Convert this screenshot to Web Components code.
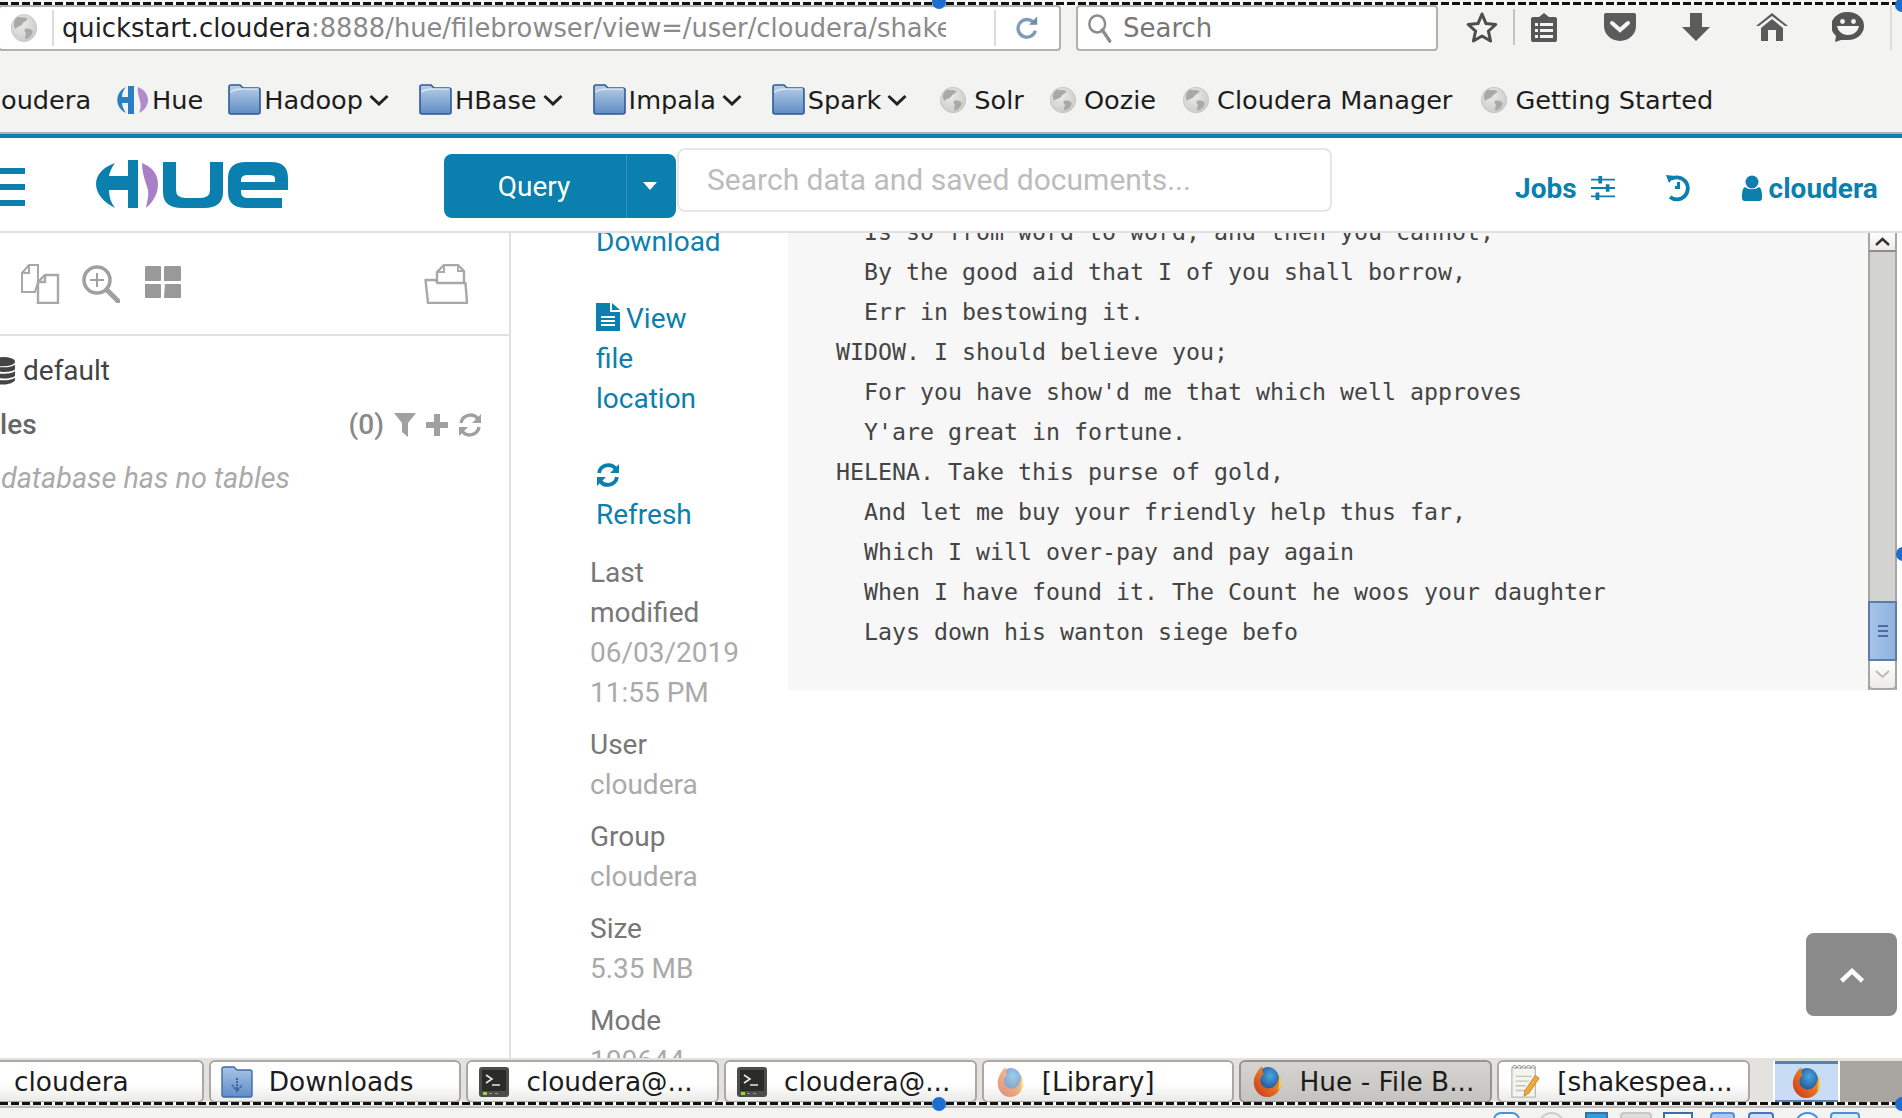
<!DOCTYPE html>
<html lang="en">
<head>
<meta charset="utf-8">
<title>Hue - File Browser</title>
<style>
  html, body { margin: 0; height: 100%; overflow: hidden; background: #fff; }
</style>
</head>
<body>
<vm-screen>
  <ff-toolbar></ff-toolbar>
  <bm-bar></bm-bar>
  <hue-nav></hue-nav>
  <hue-main></hue-main>
  <task-bar></task-bar>
  <status-strip></status-strip>
  <sel-frame></sel-frame>
</vm-screen>

<script>
const BLUE = '#0B7FAD';

// small svg set, viewBox + body. sizes come from the attributes of ui-icon
const ICONS = {
  globe: ['0 0 32 32', `<defs><radialGradient id="g" cx=".4" cy=".35" r=".8"><stop offset="0" stop-color="#ebebe9"/><stop offset="1" stop-color="#c4c4c2"/></radialGradient></defs>
    <circle cx="16" cy="16" r="14.5" fill="url(#g)" stroke="#c6c6c4"/>
    <path d="M9 4c4 1 8 0 11 2-1 3-5 3-6 6-2 3-6 2-8 5-2-3-3-9 3-13zM17 17c4-1 8 0 9 3-1 4-4 7-8 8-2-3 1-5 0-7-1-1-2-3-1-4z" fill="#a9a9a7"/>`],
  reload: ['0 0 28 28', `<path d="M22 9.5A9.5 9.5 0 1 0 23 17" fill="none" stroke="#7d9cb8" stroke-width="3.6"/><path d="M16 10.5h9v-9z" fill="#6f8eab"/>`],
  search: ['0 0 28 30', `<circle cx="11" cy="11" r="8.5" fill="none" stroke="#8c8c8c" stroke-width="2.6"/><path d="M16.5 17l8 11" stroke="#8c8c8c" stroke-width="3.6" stroke-linecap="round"/>`],
  star: ['0 0 32 32', `<path d="M16 3l4 9.6 9.8.9-7.4 6.6 2.2 9.9L16 25l-8.6 5 2.2-9.9-7.4-6.6 9.8-.9z" fill="#f4f4f2" stroke="#4d4d4d" stroke-width="3" stroke-linejoin="round"/>`],
  reader: ['0 0 28 30', `<path d="M3 5h6l5-4 5 4h6a2 2 0 0 1 2 2v21a2 2 0 0 1-2 2H3a2 2 0 0 1-2-2V7a2 2 0 0 1 2-2z" fill="#575757"/><path d="M5 11h3v3H5zM5 17h3v3H5zM5 23h3v3H5zM10 11h13v3H10zM10 17h13v3H10zM10 23h13v3H10z" fill="#f4f4f2"/>`],
  pocket: ['0 0 32 28', `<path d="M2 0h28a2 2 0 0 1 2 2v11a16 15 0 0 1-32 0V2a2 2 0 0 1 2-2z" fill="#5b5b5b"/><path d="M8 10l8 7 8-7" fill="none" stroke="#f4f4f2" stroke-width="4" stroke-linecap="round"/>`],
  download: ['0 0 28 28', `<path d="M8 0h12v14h8L14 28 0 14h8z" fill="#5b5b5b"/>`],
  home: ['0 0 32 28', `<path d="M16 0l16 13h-3L16 3 3 13H0z" fill="#5b5b5b"/><path d="M16 6l11 9v13h-7V17h-8v11H5V15z" fill="#5b5b5b"/>`],
  smile: ['0 0 32 30', `<path d="M16 0a16 14 0 0 1 0 28H9l-6 2 1-6A16 14 0 0 1 16 0z" fill="#555"/><circle cx="10.5" cy="9.500" r="2.4" fill="#f4f4f2"/><circle cx="21.5" cy="9.500" r="2.4" fill="#f4f4f2"/><path d="M5 14h22c-1 6-6 9-11 9s-10-3-11-9z" fill="#f4f4f2"/>`],
  hueFav: ['0 0 32 28', `<path d="M10 1a14 14 0 0 0 0 26c-3-4-4-8-4-10h6v11h6V0h-6v11H6c0-3 1-7 4-10z" fill="#2a7fc4"/><path d="M22 1c7 3 10 8 10 13s-3 10-9 13c2-5 2-8 1-12-1-5-3-9-2-14z" fill="#b08ccb"/>`],
  folder: ['0 0 33 31', `<defs><linearGradient id="f" x1="0" y1="0" x2="0" y2="1"><stop offset="0" stop-color="#b9cfe8"/><stop offset="1" stop-color="#5f8dc4"/></linearGradient></defs>
    <path d="M3 1h9l3 3h15a2 2 0 0 1 2 2v22a2 2 0 0 1-2 2H3a2 2 0 0 1-2-2V3a2 2 0 0 1 2-2z" fill="url(#f)" stroke="#2f5a9a" stroke-width="1.6"/><path d="M2.5 8c4-3 8-3 12-3h16" fill="none" stroke="#dce8f5" stroke-width="1.6"/>`],
  chev: ['0 0 20 12', `<path d="M1.5 2l8.5 8 8.500-8" fill="none" stroke="#222" stroke-width="3"/>`],
  caret: ['0 0 14 8', `<path d="M0 0h14L7 8z" fill="#fff"/>`],
  sliders: ['0 0 26 26', `<path d="M0 4h26M0 13h26M0 22h26" stroke="${BLUE}" stroke-width="2"/><path d="M8 0h4v8H8zM16 9h4v8h-4zM5 18h4v8H5z" fill="${BLUE}"/>`],
  history: ['0 0 26 28', `<path d="M6 5a11 11 0 1 1-1 18" fill="none" stroke="${BLUE}" stroke-width="3.8"/><path d="M1 1l9 1-6 7zM12 8h3v7h-5v-3h2z" fill="${BLUE}"/>`],
  user: ['0 0 20 26', `<circle cx="10" cy="7" r="6.5" fill="${BLUE}"/><path d="M3 12c4 3 10 3 14 0 2 1 3 4 3 8v3a3 3 0 0 1-3 3H3a3 3 0 0 1-3-3v-3c0-4 1-7 3-8z" fill="${BLUE}"/>`],
  docs: ['0 0 40 40', `<path d="M2 28V9l7-8h9v17l-3 10zM9 1v8H2" fill="#fff" stroke="#a8a8a8" stroke-width="2"/><path d="M18 39V18l7-7h13v28zM25 11v7h-7" fill="#fff" stroke="#a8a8a8" stroke-width="2.4"/>`],
  zoomIn: ['0 0 38 38', `<circle cx="15" cy="15" r="13" fill="none" stroke="#a0a0a0" stroke-width="3.6"/><path d="M15 8v14M8 15h14" stroke="#a0a0a0" stroke-width="2"/><path d="M25 25l11 11" stroke="#a0a0a0" stroke-width="5" stroke-linecap="round"/>`],
  grid: ['0 0 37 32', `<path d="M2 0h14a1 1 0 0 1 1 1v13a1 1 0 0 1-1 1H1V1zM21 0h15a1 1 0 0 1 1 1v13a1 1 0 0 1-1 1H20V1zM1 18h15a1 1 0 0 1 1 1v12a1 1 0 0 1-1 1H2a1 1 0 0 1-1-1zM21 18h15a1 1 0 0 1 1 1v12a1 1 0 0 1-1 1H21a1 1 0 0 1-1-1z" fill="#999"/>`],
  openFolder: ['0 0 44 40', `<path d="M13 18V8l7-7h14l6 6v11" fill="none" stroke="#a8a8a8" stroke-width="2.4" stroke-linejoin="round"/><path d="M20 1v7h-7M34 1v6h6" fill="none" stroke="#a8a8a8" stroke-width="1.8"/><path d="M1.500 16h10l2 3h28l1.500 20H4z" fill="none" stroke="#a8a8a8" stroke-width="2.4" stroke-linejoin="round"/>`],
  db: ['0 0 24 30', `<ellipse cx="12" cy="5" rx="12" ry="5" fill="#444"/><path d="M0 8c3 4 21 4 24 0v5c-3 4-21 4-24 0zM0 15c3 4 21 4 24 0v5c-3 4-21 4-24 0zM0 22c3 4 21 4 24 0v3c-3 6-21 6-24 0z" fill="#444"/>`],
  funnel: ['0 0 22 24', `<path d="M0 0h22L14 10v14l-6-5v-9z" fill="#a0a0a0"/>`],
  plus: ['0 0 22 22', `<path d="M8 0h6v8h8v6h-8v8H8v-8H0V8h8z" fill="#a0a0a0"/>`],
  refreshGray: ['0 0 24 24', `<path d="M3 10A9.5 9.5 0 0 1 20 6M21 14A9.5 9.5 0 0 1 4 18" fill="none" stroke="#a0a0a0" stroke-width="3.4"/><path d="M23 1v9h-9zM1 23v-9h9z" fill="#a0a0a0"/>`],
  file: ['0 0 24 28', `<path d="M0 0h14v9h10v19H0z" fill="${BLUE}"/><path d="M16 0l8 7h-8z" fill="${BLUE}"/><path d="M5 13h14v2H5zM5 17h14v2H5zM5 21h14v2H5z" fill="#fff"/>`],
  refreshBlue: ['0 0 24 24', `<path d="M3 10A9.5 9.5 0 0 1 20 6M21 14A9.5 9.5 0 0 1 4 18" fill="none" stroke="${BLUE}" stroke-width="3.8"/><path d="M23 1v9h-9zM1 23v-9h9z" fill="${BLUE}"/>`],
  dlFolder: ['0 0 32 32', `<defs><linearGradient id="d" x1="0" y1="0" x2="0" y2="1"><stop offset="0" stop-color="#a9c4e4"/><stop offset="1" stop-color="#5f8dc8"/></linearGradient></defs>
    <path d="M3 1h10l3 3h13a2 2 0 0 1 2 2v23a2 2 0 0 1-2 2H3a2 2 0 0 1-2-2V3a2 2 0 0 1 2-2z" fill="url(#d)" stroke="#3f6ba8" stroke-width="1.4"/><path d="M16 12v11M11 19l5 6 5-6" fill="none" stroke="#2f5f9f" stroke-width="1.8" stroke-dasharray="2 1"/>`],
  term: ['0 0 32 32', `<rect x="1" y="1" width="30" height="30" rx="3" fill="#4c4c48"/><rect x="4" y="4" width="24" height="21" fill="#2b2b29"/><path d="M8 9l6 4-6 4M14 19h8" fill="none" stroke="#e8e8e8" stroke-width="1.6"/><path d="M5 26h4v3H5z" fill="#8fdc3c"/><path d="M11 27h3v1h-3zM17 27h3v1h-3z" fill="#999"/>`],
  fox: ['0 0 32 34', `<defs><radialGradient id="b" cx=".6" cy=".35" r=".6"><stop offset="0" stop-color="#4aa6dc"/><stop offset="1" stop-color="#1c4f96"/></radialGradient>
    <linearGradient id="o" x1="0" y1="1" x2="1" y2="0"><stop offset="0" stop-color="#c8321c"/><stop offset=".7" stop-color="#ef8a24"/><stop offset="1" stop-color="#f8c83c"/></linearGradient></defs>
    <ellipse cx="17" cy="15" rx="12" ry="13" fill="url(#b)"/>
    <path d="M11 1C7 4 3 10 2 16c-1 9 6 17 14 17 9 0 15-7 15-15 0-3-1-6-2-8 0 6-3 12-9 14-6 1-11-3-11-8 0-3 1-5 3-6-1-3-1-6-1-9z" fill="url(#o)"/>
    <path d="M28 8c2 3 3 6 3 10 0 3-1 6-3 8 1-5 2-12 0-18z" fill="#f6d04a"/>`],
  note: ['0 0 32 36', `<path d="M2 3h25v31H2z" fill="#f4f4ee" stroke="#bbb" stroke-width="1.4"/><path d="M3 3a2 2 0 1 1 3 1M8 3a2 2 0 1 1 3 1M13 3a2 2 0 1 1 3 1M18 3a2 2 0 1 1 3 1M23 3a2 2 0 1 1 3 1" fill="none" stroke="#888"/><path d="M6 12h17M6 17h14M6 22h11M6 27h10" stroke="#c4c4bc" stroke-width="1.4"/><path d="M27 11l4 3-11 16-5 3 1-6z" fill="#f2a93c" stroke="#c77f22"/>`]
};

class UiIcon extends HTMLElement {
  connectedCallback() {
    const name = this.getAttribute('name');
    const w = this.getAttribute('w') || 24;
    const h = this.getAttribute('h') || w;
    const [vb, body] = ICONS[name];
    this.attachShadow({ mode: 'open' }).innerHTML = `
      <style>:host { display: block; flex: none; width: ${w}px; height: ${h}px; } svg { display: block; width: 100%; height: 100%; }</style>
      <svg viewBox="${vb}" preserveAspectRatio="none" xmlns="http://www.w3.org/2000/svg">${body}</svg>`;
  }
}
customElements.define('ui-icon', UiIcon);

class VmScreen extends HTMLElement {
  constructor() {
    super();
    this.attachShadow({ mode: 'open' }).innerHTML = `
      <style>
        :host { display: flex; flex-direction: column; position: relative; width: 1902px; height: 1118px; overflow: hidden; background: #fff; }
      </style>
      <slot></slot>`;
  }
}
customElements.define('vm-screen', VmScreen);

// the dashed selection box and its handles, drawn over the whole capture
class SelFrame extends HTMLElement {
  constructor() {
    super();
    this.attachShadow({ mode: 'open' }).innerHTML = `
      <style>
        :host { display: block; position: absolute; inset: 0; pointer-events: none; }
        .dash { position: absolute; left: 0; right: 0; height: 3px; background: repeating-linear-gradient(90deg, #111 0 8px, #fff 8px 11px); }
        .top { top: 2px; } .bot { top: 1102px; }
        .dot { position: absolute; width: 14px; height: 14px; border-radius: 50%; background: #1c6fd0; }
      </style>
      <div class="dash top"></div>
      <div class="dash bot"></div>
      <div class="dot" style="left:932px;top:-5px"></div>
      <div class="dot" style="left:1895px;top:-2px"></div>
      <div class="dot" style="left:1896px;top:547px"></div>
      <div class="dot" style="left:932px;top:1097px"></div>
      <div class="dot" style="left:1895px;top:1097px"></div>`;
  }
}
customElements.define('sel-frame', SelFrame);

class FfToolbar extends HTMLElement {
  constructor() {
    super();
    this.attachShadow({ mode: 'open' }).innerHTML = `
      <style>
        :host { display: flex; align-items: flex-start; height: 51px; flex: none; box-sizing: border-box; padding-top: 5px; background: #f3f3f1; font: 26px "DejaVu Sans", sans-serif; }
        .box { display: flex; align-items: center; height: 46px; box-sizing: border-box; background: #fff; border: 2px solid #b3b1ac; border-radius: 4px; flex: none; }
        .url { width: 1063px; margin-left: -2px; padding-left: 10px; }
        .sep { width: 2px; height: 36px; background: #dcdcda; flex: none; }
        .addr { width: 884px; margin-left: 8px; margin-right: 48px; overflow: hidden; white-space: nowrap; color: #8a8a8a; font-size: 25.75px; }
        .addr b { font-weight: 400; color: #222; }
        .find { width: 362px; margin-left: 15px; padding-left: 9px; gap: 10px; color: #777; }
        .tools { display: flex; align-items: center; height: 36px; margin-top: 4px; }
      </style>
      <div class="box url">
        <ui-icon name="globe" w="28" h="30"></ui-icon>
        <div class="sep" style="margin-left:14px"></div>
        <div class="addr"><b>quickstart.cloudera</b>:8888/hue/filebrowser/view=/user/cloudera/shake</div>
        <div class="sep"></div>
        <ui-icon name="reload" w="26" h="26" style="margin-left:18px"></ui-icon>
      </div>
      <div class="box find">
        <ui-icon name="search" w="26" h="30"></ui-icon>
        <span>Search</span>
      </div>
      <div class="tools">
        <ui-icon name="star" w="32" h="32" style="margin-left:28px"></ui-icon>
        <div class="sep" style="margin-left:15px;background:#c4c4c2"></div>
        <ui-icon name="reader" w="28" h="30" style="margin-left:15px"></ui-icon>
        <ui-icon name="pocket" w="32" h="28" style="margin-left:46px"></ui-icon>
        <ui-icon name="download" w="28" h="28" style="margin-left:46px"></ui-icon>
        <ui-icon name="home" w="32" h="28" style="margin-left:46px"></ui-icon>
        <ui-icon name="smile" w="32" h="30" style="margin-left:44px"></ui-icon>
        <div class="sep" style="margin-left:26px;height:46px;background:#dcdcda"></div>
      </div>`;
  }
}
customElements.define('ff-toolbar', FfToolbar);

class BmItem extends HTMLElement {
  constructor() {
    super();
    const icon = this.getAttribute('icon');
    const w = this.getAttribute('iw') || 33;
    const h = this.getAttribute('ih') || 31;
    const gap = icon === 'globe' ? 7 : icon === 'hueFav' ? 4 : 3;
    this.attachShadow({ mode: 'open' }).innerHTML = `
      <style>
        :host { display: flex; align-items: center; gap: ${gap}px; flex: none; color: #1c1c1c; }
        :host([menu]) { margin-right: 5px; }
        .chev { margin-left: 3px; margin-top: 1px; }
      </style>
      ${icon ? `<ui-icon name="${icon}" w="${w}" h="${h}"></ui-icon>` : ''}
      <span><slot></slot></span>
      ${this.hasAttribute('menu') ? `<ui-icon class="chev" name="chev" w="20" h="12"></ui-icon>` : ''}`;
  }
}
customElements.define('bm-item', BmItem);

class BmBar extends HTMLElement {
  constructor() {
    super();
    this.attachShadow({ mode: 'open' }).innerHTML = `
      <style>
        :host { display: flex; align-items: center; flex: none; height: 87px; box-sizing: border-box; padding: 17px 0 3px; gap: 25px; background: #f3f3f1; border-bottom: 4px solid ${BLUE}; box-shadow: inset 0 -2px 0 #b3b1ac; font: 25.6px "DejaVu Sans", sans-serif; }
        .first { margin-left: -24px; }
      </style>
      <bm-item class="first">Cloudera</bm-item>
      <bm-item icon="hueFav" iw="32" ih="28">Hue</bm-item>
      <bm-item icon="folder" menu>Hadoop</bm-item>
      <bm-item icon="folder" menu>HBase</bm-item>
      <bm-item icon="folder" menu>Impala</bm-item>
      <bm-item icon="folder" menu>Spark</bm-item>
      <bm-item icon="globe" iw="28" ih="28" style="margin-left:2px">Solr</bm-item>
      <bm-item icon="globe" iw="28" ih="28">Oozie</bm-item>
      <bm-item icon="globe" iw="28" ih="28" style="margin-left:1px">Cloudera Manager</bm-item>
      <bm-item icon="globe" iw="28" ih="28" style="margin-left:3px">Getting Started</bm-item>`;
  }
}
customElements.define('bm-bar', BmBar);

class HueNav extends HTMLElement {
  constructor() {
    super();
    this.attachShadow({ mode: 'open' }).innerHTML = `
      <style>
        :host { display: flex; align-items: flex-start; flex: none; height: 95px; box-sizing: border-box; border-bottom: 2px solid #e0e0e0; background: #fff; font: 28px Roboto, sans-serif; }
        .burger { display: flex; flex-direction: column; gap: 10px; width: 25px; margin-top: 30px; }
        .burger i { display: block; height: 6px; background: ${BLUE}; }
        .logo { width: 192px; height: 48px; margin: 22px 0 0 71px; flex: none; }
        .query { display: flex; height: 64px; width: 232px; margin: 16px 0 0 156px; background: ${BLUE}; border-radius: 8px; color: #fff; flex: none; box-sizing: border-box; }
        .query span { width: 183px; box-sizing: border-box; padding-right: 2px; display: flex; align-items: center; justify-content: center; border-right: 1px solid #3a94b8; }
        .query div { flex: 1; display: flex; align-items: center; justify-content: center; padding-right: 3px; }
        .input { width: 655px; height: 64px; box-sizing: border-box; margin: 10px 0 0 1px; padding: 0 0 2px 28px; border: 2px solid #e6e6e6; border-radius: 8px; display: flex; align-items: center; color: #bcbcbc; flex: none; font-size: 30px; }
        .right { display: flex; align-items: center; height: 40px; margin-top: 30px; color: ${BLUE}; font-weight: 700; }
        .jobs { margin-left: 183px; }
      </style>
      <div class="burger"><i></i><i></i><i></i></div>
      <svg class="logo" viewBox="0 0 192 48" xmlns="http://www.w3.org/2000/svg">
        <path d="M19 3C7 7 0 15 0 24s7 18 19 24c-4-5-6-11-6-18v0h19v18h10V0H32v16H13c1-5 3-9 6-13z" fill="${BLUE}"/>
        <path d="M46 3c10 4 16 11 16 21s-5 18-12 24c1-7 3-11 2-18-1-5-6-15-6-27z" fill="#a97fc8"/>
        <path d="M67 2h13v28q0 8 10 8h14q10 0 10-8V2h13v30q0 16-19 16H86q-19 0-19-16z" fill="${BLUE}"/>
        <path fill-rule="evenodd" d="M150 2h25q17 0 17 16v12h-47v2q0 6 7 6h34v10h-36q-18 0-18-16V18q0-16 18-16zM145 22h34v-4q0-3-7-3h-20q-7 0-7 5z" fill="${BLUE}"/>
      </svg>
      <div class="query"><span>Query</span><div><ui-icon name="caret" w="14" h="8"></ui-icon></div></div>
      <div class="input">Search data and saved documents...</div>
      <div class="right">
        <span class="jobs">Jobs</span>
        <ui-icon name="sliders" w="24" h="24" style="margin-left:14px"></ui-icon>
        <ui-icon name="history" w="26" h="28" style="margin-left:50px"></ui-icon>
        <ui-icon name="user" w="20" h="26" style="margin-left:51px"></ui-icon>
        <span style="margin-left:7px">cloudera</span>
      </div>`;
  }
}
customElements.define('hue-nav', HueNav);

class HueSidebar extends HTMLElement {
  constructor() {
    super();
    this.attachShadow({ mode: 'open' }).innerHTML = `
      <style>
        :host { display: block; flex: none; width: 511px; box-sizing: border-box; border-right: 2px solid #e0e0e0; font: 28px/40px Roboto, sans-serif; color: #444; }
        .tools { display: flex; align-items: center; height: 103px; box-sizing: border-box; border-bottom: 2px solid #e0e0e0; padding: 1px 0 0 20px; }
        .db { display: flex; align-items: center; height: 40px; margin-top: 15px; }
        .db span { margin-left: 8px; }
        .tables { display: flex; align-items: center; height: 40px; margin-top: 14px; padding-right: 27px; color: #666; font-weight: 500; }
        .tables .count { margin-left: auto; color: #888; }
        .empty { margin: 13px 0 0 -53px; color: #aaa; font-style: italic; font-size: 28.8px; white-space: nowrap; }
      </style>
      <div class="tools">
        <ui-icon name="docs" w="40" h="40"></ui-icon>
        <ui-icon name="zoomIn" w="38" h="38" style="margin-left:22px"></ui-icon>
        <ui-icon name="grid" w="37" h="32" style="margin-left:24px;margin-top:-4px"></ui-icon>
        <ui-icon name="openFolder" w="44" h="40" style="margin-left:243px"></ui-icon>
      </div>
      <div class="db"><ui-icon name="db" w="24" h="28" style="margin-left:-9px"></ui-icon><span>default</span></div>
      <div class="tables">
        <span style="margin-left:-46px">Tables</span>
        <span class="count">(0)</span>
        <ui-icon name="funnel" w="22" h="24" style="margin-left:10px"></ui-icon>
        <ui-icon name="plus" w="22" h="22" style="margin-left:10px"></ui-icon>
        <ui-icon name="refreshGray" w="24" h="24" style="margin-left:10px"></ui-icon>
      </div>
      <div class="empty">The database has no tables</div>`;
  }
}
customElements.define('hue-sidebar', HueSidebar);

class MetaGroup extends HTMLElement {
  constructor() {
    super();
    this.attachShadow({ mode: 'open' }).innerHTML = `
      <style>
        :host { display: block; margin-bottom: 12px; color: #777; }
        .v { color: #aaa; }
      </style>
      <div><slot name="k"></slot></div>
      <div class="v"><slot></slot></div>`;
  }
}
customElements.define('meta-group', MetaGroup);

class HueDetails extends HTMLElement {
  constructor() {
    super();
    this.attachShadow({ mode: 'open' }).innerHTML = `
      <style>
        :host { display: block; flex: none; width: 277px; box-sizing: border-box; padding-left: 85px; margin-top: -11px; font: 28px/40px Roboto, sans-serif; color: ${BLUE}; }
        .act { width: 120px; }
        .view { margin-top: 37px; }
        .view ui-icon { display: inline-block; vertical-align: -3px; margin-right: 6px; }
        .refresh { margin-top: 36px; padding-top: 8px; }
        .refresh ui-icon { margin-bottom: 8px; }
        .meta { margin: 18px 0 0 -6px; width: 160px; }
      </style>
      <div class="act">Download</div>
      <div class="act view"><ui-icon name="file" w="24" h="28"></ui-icon>View<br>file<br>location</div>
      <div class="act refresh"><ui-icon name="refreshBlue" w="24" h="24"></ui-icon>Refresh</div>
      <div class="meta">
        <meta-group><span slot="k">Last modified</span>06/03/2019 11:55 PM</meta-group>
        <meta-group><span slot="k">User</span>cloudera</meta-group>
        <meta-group><span slot="k">Group</span>cloudera</meta-group>
        <meta-group><span slot="k">Size</span>5.35 MB</meta-group>
        <meta-group><span slot="k">Mode</span>100644</meta-group>
      </div>`;
  }
}
customElements.define('hue-details', HueDetails);

class ScrollBar extends HTMLElement {
  constructor() {
    super();
    this.attachShadow({ mode: 'open' }).innerHTML = `
      <style>
        :host { display: flex; flex-direction: column; flex: none; width: 29px; box-sizing: border-box; background: #d3d3d1; border-left: 2px solid #a8a6a2; border-right: 2px solid #a8a6a2; }
        .btn { display: flex; align-items: center; justify-content: center; background: linear-gradient(#fff, #ecebe9); box-sizing: border-box; flex: none; margin: 0 -2px; }
        .up { height: 19px; border-bottom: 2px solid #8f8d89; border-left: 2px solid #a8a6a2; border-right: 2px solid #a8a6a2; }
        .down { height: 29px; border: 2px solid #a8a6a2; border-top: 0; border-radius: 0 0 5px 5px; }
        .track { flex: 1; }
        .thumb { height: 60px; flex: none; margin: 0 -2px; box-sizing: border-box; border: 2px solid #5c7da8; background: linear-gradient(90deg, #a6c4ea, #8fb2de); display: flex; flex-direction: column; gap: 3px; align-items: center; justify-content: center; }
        .thumb i { display: block; width: 10px; height: 2px; background: #4a6f9e; }
        svg { display: block; }
      </style>
      <div class="btn up"><svg width="15" height="9" viewBox="0 0 15 9"><path d="M1 8l6.5-6L14 8" fill="none" stroke="#333" stroke-width="2.4"/></svg></div>
      <div class="track"></div>
      <div class="thumb"><i></i><i></i><i></i></div>
      <div class="btn down"><svg width="15" height="9" viewBox="0 0 15 9"><path d="M1 1l6.5 6L14 1" fill="none" stroke="#bbb" stroke-width="2"/></svg></div>`;
  }
}
customElements.define('scroll-bar', ScrollBar);

class CodeView extends HTMLElement {
  constructor() {
    super();
    const lines = [
      "  Is so from word to word, and then you cannot,",
      "  By the good aid that I of you shall borrow,",
      "  Err in bestowing it.",
      "WIDOW. I should believe you;",
      "  For you have show'd me that which well approves",
      "  Y'are great in fortune.",
      "HELENA. Take this purse of gold,",
      "  And let me buy your friendly help thus far,",
      "  Which I will over-pay and pay again",
      "  When I have found it. The Count he woos your daughter",
      "  Lays down his wanton siege befo"
    ];
    this.attachShadow({ mode: 'open' }).innerHTML = `
      <style>
        :host { display: flex; flex: none; width: 1109px; height: 457px; background: #f7f7f7; overflow: hidden; }
        pre { flex: 1; margin: -21px 0 0; padding: 0 0 0 48px; font: 23.25px/40px "DejaVu Sans Mono", monospace; color: #444; }
      </style>
      <pre>${lines.join('\n')}</pre>
      <scroll-bar></scroll-bar>`;
  }
}
customElements.define('code-view', CodeView);

class HueMain extends HTMLElement {
  constructor() {
    super();
    this.attachShadow({ mode: 'open' }).innerHTML = `
      <style>
        :host { display: flex; flex: 1; min-height: 0; position: relative; overflow: hidden; background: #fff; }
        .top { position: absolute; left: 1806px; top: 700px; width: 91px; height: 83px; border-radius: 8px; background: #8a8a8a; display: flex; align-items: center; justify-content: center; }
      </style>
      <hue-sidebar></hue-sidebar>
      <hue-details></hue-details>
      <code-view></code-view>
      <div class="top"><svg width="26" height="16" viewBox="0 0 26 16"><path d="M2.5 14L13 4l10.500 10" fill="none" stroke="#fff" stroke-width="4.500"/></svg></div>`;
  }
}
customElements.define('hue-main', HueMain);

class TaskBtn extends HTMLElement {
  constructor() {
    super();
    const icon = this.getAttribute('icon');
    this.attachShadow({ mode: 'open' }).innerHTML = `
      <style>
        :host { display: flex; align-items: center; flex: none; width: 252.7px; height: 43px; box-sizing: border-box; padding-left: 10px; border: 2px solid #aaa8a3; border-radius: 6px; background: linear-gradient(#fff 55%, #eaeae8); color: #1c1c1c; white-space: nowrap; overflow: hidden; }
        :host([active]) { background: linear-gradient(#d6d4d0, #c6c4c0); border-color: #96948f; }
        .i { width: 32px; margin-right: 16px; display: flex; justify-content: center; flex: none; }
        :host([dim]) ui-icon { opacity: .55; }
      </style>
      ${icon ? `<div class="i"><ui-icon name="${icon}" w="${this.getAttribute('iw') || 32}" h="${this.getAttribute('ih') || 32}"></ui-icon></div>` : ''}
      <slot></slot>`;
  }
}
customElements.define('task-btn', TaskBtn);

class TaskBar extends HTMLElement {
  constructor() {
    super();
    this.attachShadow({ mode: 'open' }).innerHTML = `
      <style>
        :host { display: flex; align-items: flex-end; flex: none; height: 48px; box-sizing: border-box; padding-bottom: 3px; gap: 5px; background: #e4e2de; font: 26.4px "DejaVu Sans", sans-serif; }
        .first { margin-left: -49px; padding-left: 61px; }
        .pager { display: flex; align-items: center; justify-content: center; flex: none; width: 67px; height: 42px; margin-left: 18px; box-sizing: border-box; background: #c8ddf5; border: solid #fff; border-width: 0 2px; box-shadow: inset 0 3px 0 #5a7fb0, inset 0 -3px 0 #5a7fb0; }
        .fill { flex: 1; height: 42px; margin-left: -5px; background: #a8a5a0; }
      </style>
      <task-btn class="first">cloudera</task-btn>
      <task-btn icon="dlFolder">Downloads</task-btn>
      <task-btn icon="term">cloudera@...</task-btn>
      <task-btn icon="term">cloudera@...</task-btn>
      <task-btn icon="fox" iw="28" ih="32" dim>[Library]</task-btn>
      <task-btn icon="fox" iw="30" ih="33" active>Hue - File B...</task-btn>
      <task-btn icon="note" iw="30" ih="34">[shakespea...</task-btn>
      <div class="pager"><ui-icon name="fox" w="30" h="33"></ui-icon></div>
      <div class="fill"></div>`;
  }
}
customElements.define('task-bar', TaskBar);

// only the tops of the tray icons are on screen
class StatusStrip extends HTMLElement {
  constructor() {
    super();
    const tray = [[1493, 27, '#4a90d9', '#fff', 8], [1538, 27, '#ccc', '#eee', 14], [1585, 23, '#3a6ea8', '#29a0e0', 0], [1620, 32, '#c8c8c8', '#ddd', 4], [1663, 30, '#3a6ea8', '#fff', 0], [1710, 25, '#5a8fd0', '#a8c8f0', 4], [1748, 26, '#4a70c0', '#cfe0f8', 4], [1795, 25, '#4a90d9', '#fff', 12], [1830, 30, '#4a90d9', '#dcecfb', 4]];
    let x = 0;
    const html = tray.map(([left, w, c, bg, r]) => {
      const m = left - x; x = left + w;
      return `<i style="margin-left:${m}px;width:${w}px;border-color:${c};background:${bg};border-radius:${r}px ${r}px 0 0"></i>`;
    }).join('');
    this.attachShadow({ mode: 'open' }).innerHTML = `
      <style>
        :host { display: flex; flex: none; height: 12px; align-items: flex-start; box-sizing: border-box; padding-top: 4px; background: #f3f3f1; border-top: 2px solid #bdbbb6; overflow: hidden; }
        i { display: block; flex: none; height: 20px; box-sizing: border-box; border: 2px solid; }
      </style>${html}`;
  }
}
customElements.define('status-strip', StatusStrip);
</script>
</body>
</html>
